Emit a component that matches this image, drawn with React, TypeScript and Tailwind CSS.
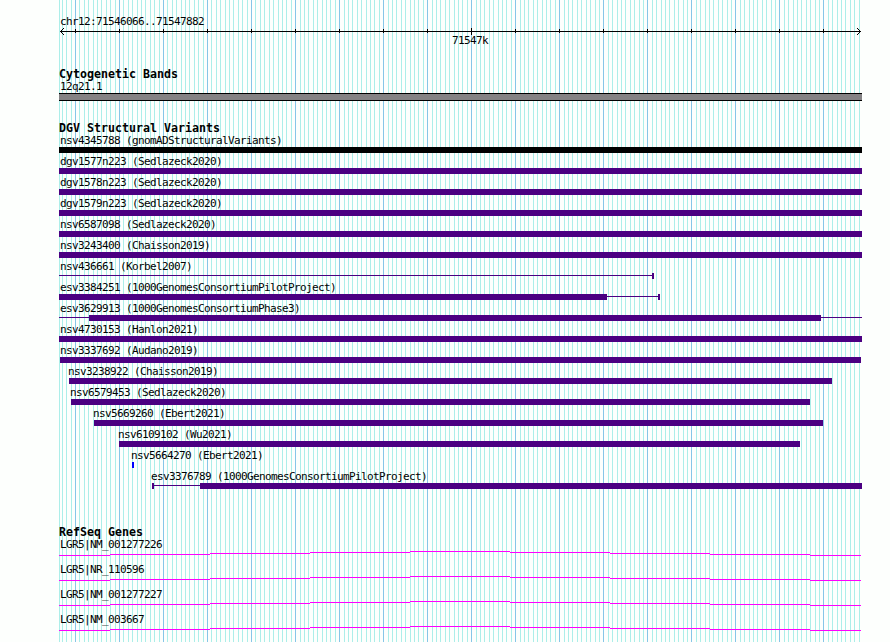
import React from 'react';
import clsx from 'clsx';

type PartKind = 'bar' | 'line' | 'cap';

interface Part {
  kind: PartKind;
  width: number;
}

interface Variant {
  name: string;
  start: number;
  parts: Part[];
  color?: string;
}

// plot area starts at x = 59 and is 803px wide
const PLOT_WIDTH = 803;
const REGION_START = 71546066;
const REGION_END = 71547882;
const PX_PER_BASE = 800 / (REGION_END - REGION_START + 1);

const bar = (width: number): Part => ({ kind: 'bar', width });
const line = (width: number): Part => ({ kind: 'line', width });
const cap: Part = { kind: 'cap', width: 2 };

const variants: Variant[] = [
  { name: 'nsv4345788 (gnomADStructuralVariants)', start: 0, parts: [bar(803)], color: 'bg-black' },
  { name: 'dgv1577n223 (Sedlazeck2020)', start: 0, parts: [bar(803)] },
  { name: 'dgv1578n223 (Sedlazeck2020)', start: 0, parts: [bar(803)] },
  { name: 'dgv1579n223 (Sedlazeck2020)', start: 0, parts: [bar(803)] },
  { name: 'nsv6587098 (Sedlazeck2020)', start: 0, parts: [bar(803)] },
  { name: 'nsv3243400 (Chaisson2019)', start: 0, parts: [bar(803)] },
  { name: 'nsv436661 (Korbel2007)', start: 0, parts: [line(593), cap] },
  { name: 'esv3384251 (1000GenomesConsortiumPilotProject)', start: 0, parts: [bar(548), line(51), cap] },
  { name: 'esv3629913 (1000GenomesConsortiumPhase3)', start: 0, parts: [line(30), bar(732), line(41)] },
  { name: 'nsv4730153 (Hanlon2021)', start: 0, parts: [bar(803)] },
  { name: 'nsv3337692 (Audano2019)', start: 1, parts: [bar(801)] },
  { name: 'nsv3238922 (Chaisson2019)', start: 10, parts: [bar(763)] },
  { name: 'nsv6579453 (Sedlazeck2020)', start: 12, parts: [bar(739)] },
  { name: 'nsv5669260 (Ebert2021)', start: 35, parts: [bar(729)] },
  { name: 'nsv6109102 (Wu2021)', start: 60, parts: [bar(681)] },
  { name: 'nsv5664270 (Ebert2021)', start: 73, parts: [cap], color: 'bg-[#0000ff]' },
  { name: 'esv3376789 (1000GenomesConsortiumPilotProject)', start: 93, parts: [cap, line(46), bar(662)] },
];

const genes = ['LGR5|NM_001277226', 'LGR5|NR_110596', 'LGR5|NM_001277227', 'LGR5|NM_003667'];

// intron hat: [width, drop from the top of the hat]
const intronSteps: [number, number][] = [
  [51, 4], [100, 3], [100, 2], [100, 1], [100, 0], [100, 1], [100, 2], [100, 3], [51, 4],
];

const majorTicks = Array.from({ length: 18 }, (_, i) => 16 + i * 44);

const Grid: React.FC = () => {
  const lines: { x: number; major: boolean }[] = [{ x: 0, major: false }];
  for (let pos = 71546070; pos <= REGION_END; pos += 10) {
    lines.push({
      x: Math.round(1 + (pos - REGION_START) * PX_PER_BASE),
      major: pos % 100 === 0,
    });
  }
  return (
    <svg className="absolute top-0 left-[59px]" width={PLOT_WIDTH} height={642} shapeRendering="crispEdges">
      {lines.map(({ x, major }) => (
        <rect key={x} x={x} y={0} width={1} height={642} fill={major ? '#87c6e8' : '#aceee9'} />
      ))}
    </svg>
  );
};

const Label: React.FC<{ children: React.ReactNode; className?: string }> = ({ children, className }) => (
  <div className={clsx('h-3 pl-px text-[11px] leading-[14px] tracking-[-0.622px] whitespace-nowrap', className)}>
    {children}
  </div>
);

const TrackTitle: React.FC<{ children: React.ReactNode }> = ({ children }) => (
  <h2 className="h-3 text-[11.63px] leading-3 font-bold whitespace-nowrap">{children}</h2>
);

const Ruler: React.FC = () => (
  <svg width={PLOT_WIDTH} height={7} shapeRendering="crispEdges" className="block">
    <rect x={1} y={3} width={801} height={1} />
    {[1, 2, 3].map(d => (
      <g key={d}>
        <rect x={1 + d} y={3 - d} width={1} height={1} />
        <rect x={1 + d} y={3 + d} width={1} height={1} />
        <rect x={801 - d} y={3 - d} width={1} height={1} />
        <rect x={801 - d} y={3 + d} width={1} height={1} />
      </g>
    ))}
    {majorTicks.map(x => (
      <rect key={x} x={x} y={x === 412 ? 0 : 1} width={1} height={x === 412 ? 7 : 4} />
    ))}
  </svg>
);

const VariantRow: React.FC<{ variant: Variant }> = ({ variant }) => {
  const color = variant.color ?? 'bg-[#4b0082]';
  return (
    <div className="flex h-[21px] flex-col justify-between pt-0.5">
      <div style={{ marginLeft: variant.start > 1 ? variant.start - 2 : 0 }}>
        <Label>{variant.name}</Label>
      </div>
      <div className="flex h-1.5" style={{ marginLeft: variant.start }}>
        {variant.parts.map((part, i) => (
          <div
            key={i}
            className={clsx(color, part.kind === 'line' ? 'mt-0.5 h-px' : 'h-1.5')}
            style={{ width: part.width }}
          />
        ))}
      </div>
    </div>
  );
};

const GeneRow: React.FC<{ name: string }> = ({ name }) => (
  <div className="h-[25px]">
    <Label>{name}</Label>
    <div className="mt-px flex">
      {intronSteps.map(([width, drop], i) => (
        <div key={i} style={{ width, paddingTop: drop }}>
          <div className="h-px bg-[#ff00ff]" />
        </div>
      ))}
    </div>
  </div>
);

export default function App() {
  return (
    <div className="relative h-[642px] w-[890px] overflow-hidden bg-[#fdfffd] font-['DejaVu_Sans_Mono',monospace] text-black">
      <Grid />
      <div className="relative ml-[59px] flex w-[803px] flex-col pt-[15px]">
        {/* Scale */}
        <Label>chr12:71546066..71547882</Label>
        <div className="mt-px">
          <Ruler />
        </div>
        <Label className="-mt-px ml-[392px]">71547k</Label>

        {/* Cytogenetic band */}
        <section className="mt-[22px]">
          <TrackTitle>Cytogenetic Bands</TrackTitle>
          <Label>12q21.1</Label>
          <div className="mt-px h-2 border-y border-black bg-[#848284]" />
        </section>

        {/* Structural variants */}
        <section className="mt-[21px]">
          <TrackTitle>DGV Structural Variants</TrackTitle>
          <div className="-mt-0.5">
            {variants.map(variant => (
              <VariantRow key={variant.name} variant={variant} />
            ))}
          </div>
        </section>

        {/* Genes */}
        <section className="mt-[37px]">
          <TrackTitle>RefSeq Genes</TrackTitle>
          {genes.map(name => (
            <GeneRow key={name} name={name} />
          ))}
        </section>
      </div>
    </div>
  );
}
